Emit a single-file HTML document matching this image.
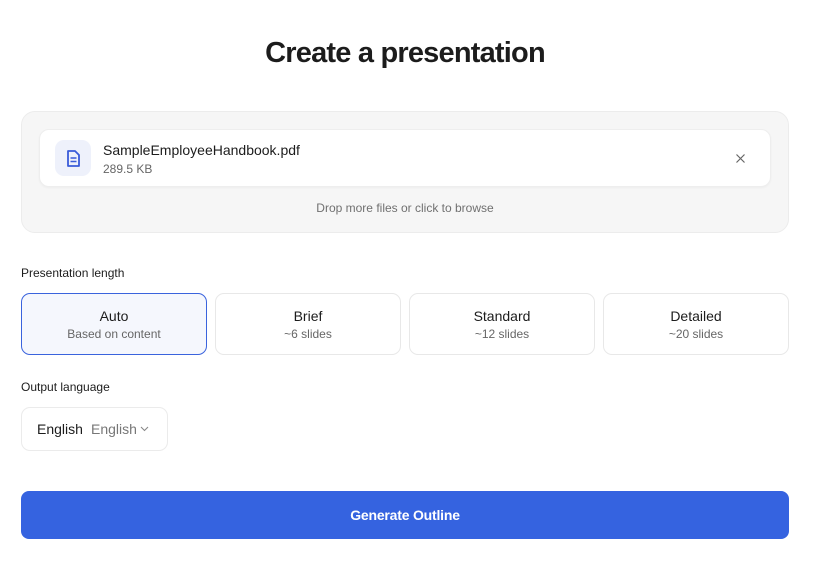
<!DOCTYPE html>
<html><head><style>
*{box-sizing:border-box;margin:0;padding:0}
body{width:825px;height:568px;background:#fff;font-family:"Liberation Sans",sans-serif;color:#1a1a1a;position:relative;overflow:hidden}
.abs{position:absolute}
h1{position:absolute;top:37px;left:0;width:810px;text-align:center;font-size:29px;font-weight:bold;letter-spacing:-0.8px;color:#1c1c1c}
.drop{left:21px;top:111px;width:768px;height:122px;background:#f6f6f6;border:1px solid #ececec;border-radius:14px}
.card{left:39px;top:129px;width:732px;height:58px;background:#fff;border:1px solid #eee;border-radius:10px;box-shadow:0 1px 2px rgba(0,0,0,.04)}
.ic{left:15px;top:10px;width:36px;height:36px;background:#eef1fb;border-radius:9px}
.opt{top:293px;width:186px;height:62px;border:1px solid #e8e8e8;border-radius:9px;text-align:center;background:#fff}
.opt b{display:block;font-weight:normal;font-size:14px;color:#1c1c1c;margin-top:14px}
.opt span{display:block;font-size:12px;color:#666;margin-top:3px}
.lbl{font-size:12px;color:#1c1c1c}
</style></head><body>
<h1>Create a presentation</h1>
<div class="abs drop"></div>
<div class="abs card">
  <div class="abs ic"><svg width="36" height="36" viewBox="0 0 36 36"><path d="M13 11h7l4 4v11h-11z" fill="none" stroke="#3a5bd9" stroke-width="1.8" stroke-linejoin="round"/><path d="M15.5 18h6M15.5 21.5h6" stroke="#3a5bd9" stroke-width="1.6"/></svg></div>
  <div class="abs" style="left:63px;top:12px;font-size:14px;color:#1c1c1c">SampleEmployeeHandbook.pdf</div>
  <div class="abs" style="left:63px;top:32px;font-size:12px;color:#666">289.5 KB</div>
  <svg class="abs" style="left:695px;top:23px" width="11" height="11" viewBox="0 0 11 11"><path d="M1.5 1.5l8 8M9.5 1.5l-8 8" stroke="#666" stroke-width="1.2"/></svg>
</div>
<div class="abs" style="left:21px;top:201px;width:768px;text-align:center;font-size:12px;color:#707070">Drop more files or click to browse</div>
<div class="abs lbl" style="left:21px;top:266px">Presentation length</div>
<div class="abs opt" style="left:21px;background:#f5f7fd;border:1.3px solid #3a63dd"><b>Auto</b><span>Based on content</span></div>
<div class="abs opt" style="left:215px"><b>Brief</b><span>~6 slides</span></div>
<div class="abs opt" style="left:409px"><b>Standard</b><span>~12 slides</span></div>
<div class="abs opt" style="left:603px"><b>Detailed</b><span>~20 slides</span></div>
<div class="abs lbl" style="left:21px;top:380px">Output language</div>
<div class="abs" style="left:21px;top:407px;width:147px;height:44px;border:1px solid #ebebeb;border-radius:9px;font-size:14px">
  <span class="abs" style="left:15px;top:13px;color:#1c1c1c">English</span>
  <span class="abs" style="left:69px;top:13px;color:#777">English</span>
  <svg class="abs" style="left:118px;top:18px" width="9" height="6" viewBox="0 0 9 6"><path d="M1 1l3.5 3.5L8 1" fill="none" stroke="#888" stroke-width="1.1"/></svg>
</div>
<div class="abs" style="left:21px;top:491px;width:768px;height:48px;background:#3563e0;border-radius:8px;color:#fff;font-size:14px;font-weight:bold;text-align:center;line-height:48px;letter-spacing:-0.2px">Generate Outline</div>
</body></html>
